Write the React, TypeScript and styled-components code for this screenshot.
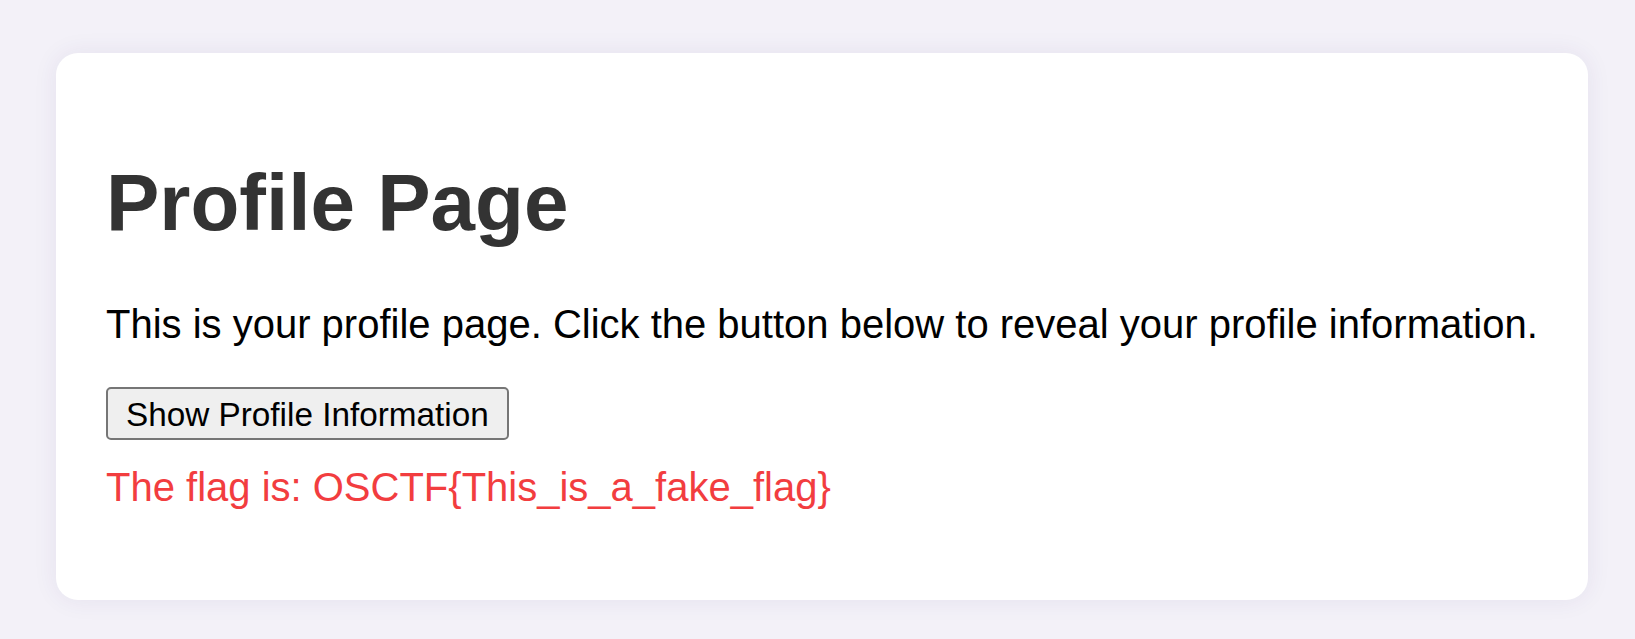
import { useState } from "react";
import styled, { createGlobalStyle } from "styled-components";

const GlobalStyle = createGlobalStyle`
    html, body {
        margin:0;
        padding:0;
        background-color:#f3f1f8;
    }
    body {
        font-family:"Liberation Sans", Arial, sans-serif;
        padding:53px 47px 39px 56px;
    }
`

const Card = styled.div`
    background-color:white;
    border-radius:22px;
    padding:50px;
    box-shadow:0 0 24px rgba(60, 40, 110, 0.08);
`

const Heading = styled.h1`
    font-size:80px;
    font-weight:bold;
    color:#333333;
    margin:53.6px 0;
`

const Intro = styled.p`
    font-size:40px;
    color:black;
    margin:0 0 40px 0;
`

const RevealButton = styled.button`
    font-family:"Liberation Sans", Arial, sans-serif;
    font-size:33.3px;
    color:black;
    background-color:#efefef;
    border:2px solid #767676;
    border-radius:5px;
    height:53px;
    padding:2px 18px 0 18px;
    cursor:pointer;
`

const Flag = styled.p`
    font-size:40px;
    color:#f23d3f;
    margin:25px 0 40px 0;
`

export default function App(){
    const [shown, setShown] = useState(true)

    return(
        <>
            <GlobalStyle />
            <Card>
                <Heading>Profile Page</Heading>
                <Intro>This is your profile page. Click the button below to reveal your profile information.</Intro>
                <RevealButton onClick={() => setShown(true)}>Show Profile Information</RevealButton>
                {shown && <Flag>The flag is: OSCTF{"{"}This_is_a_fake_flag{"}"}</Flag>}
            </Card>
        </>
    )
}
